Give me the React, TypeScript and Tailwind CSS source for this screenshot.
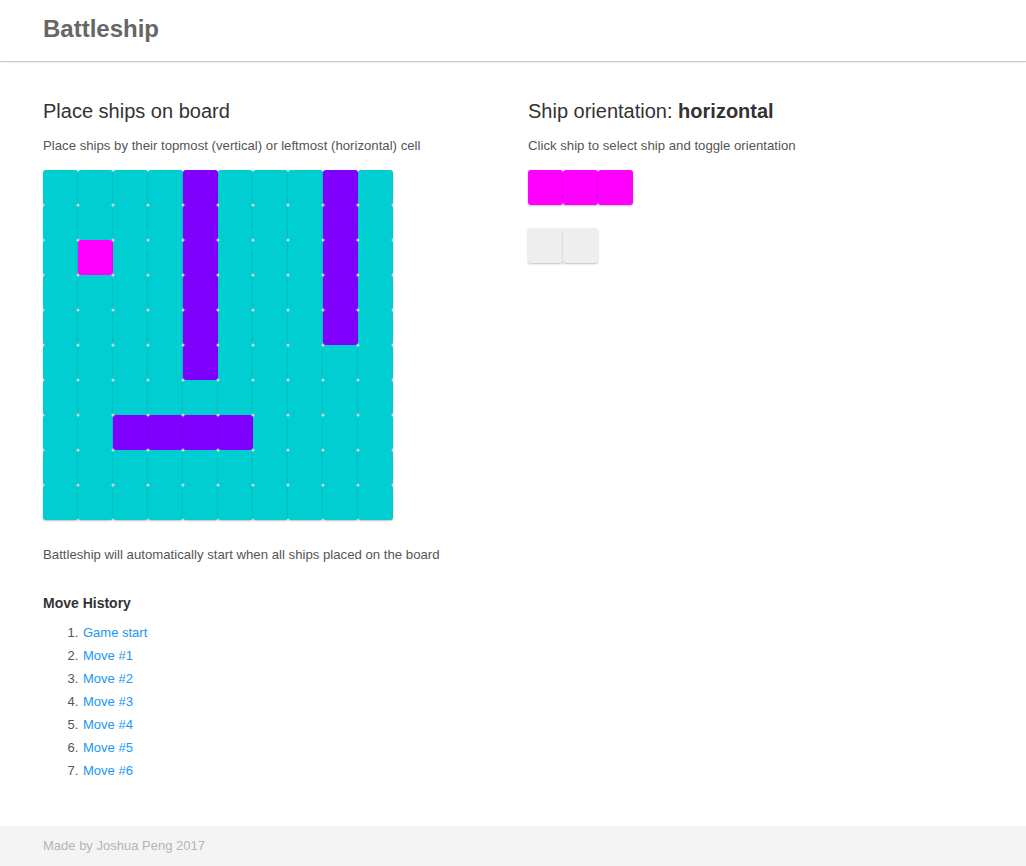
import React from 'react';

type Cell = 'water' | 'ship' | 'hover';

const SHIPS: Array<[number, number, number, boolean]> = [
  // row, col, length, vertical
  [0, 4, 6, true],
  [0, 8, 5, true],
  [7, 2, 4, false],
];

const buildBoard = (): Cell[][] => {
  const board: Cell[][] = Array.from({ length: 10 }, () => Array.from({ length: 10 }, () => 'water' as Cell));
  SHIPS.forEach(([r, c, len, vertical]) => {
    for (let i = 0; i < len; i++) {
      if (vertical) board[r + i][c] = 'ship';
      else board[r][c + i] = 'ship';
    }
  });
  board[2][1] = 'hover';
  return board;
};

const cellColor: Record<Cell, string> = {
  water: 'bg-[#00ced1]',
  ship: 'bg-[#7f00ff]',
  hover: 'bg-[#ff00ff]',
};

const Square: React.FC<{ className: string }> = ({ className }) => (
  <div className={`w-[35px] h-[35px] rounded-[3px] shadow-[0_1px_2px_rgba(0,0,0,0.25)] ${className}`} />
);

const moves = ['Game start', 'Move #1', 'Move #2', 'Move #3', 'Move #4', 'Move #5', 'Move #6'];

const App: React.FC = () => {
  const board = buildBoard();

  return (
    <div className="min-h-screen flex flex-col bg-white text-[#333] font-['Liberation_Sans',Arial,sans-serif]">
      <header className="h-[62px] border-b border-[#c8c8c8] shadow-[0_1px_2px_rgba(0,0,0,0.06)] px-[43px] flex items-center">
        <h1 className="text-[24px] font-bold text-[#666] pb-[4px]">Battleship</h1>
      </header>

      <main className="flex-grow px-[43px] pt-[36px] pb-[40px]">
        <div className="grid grid-cols-[470px_470px] gap-x-[15px]">
          <section>
            <h2 className="text-[20px] leading-[26px] text-[#333]">Place ships on board</h2>
            <p className="text-[13.2px] leading-[18px] text-[#555] mt-[13px]">
              Place ships by their topmost (vertical) or leftmost (horizontal) cell
            </p>
            <div className="mt-[15px] flex flex-col w-[350px]">
              {board.map((row, r) => (
                <div key={r} className="flex">
                  {row.map((cell, c) => (
                    <Square key={c} className={cellColor[cell]} />
                  ))}
                </div>
              ))}
            </div>
            <p className="text-[13.2px] leading-[18px] text-[#555] mt-[26px]">
              Battleship will automatically start when all ships placed on the board
            </p>

            <h3 className="text-[14px] leading-[18px] font-bold text-[#333] mt-[30px]">Move History</h3>
            <ol className="list-decimal pl-[39px] mt-[12px] text-[13px] text-[#555]">
              {moves.map((m) => (
                <li key={m} className="leading-[18px] mb-[5px] pl-[1px]">
                  <a href="#" className="text-[#2196f3]">{m}</a>
                </li>
              ))}
            </ol>
          </section>

          <section>
            <h2 className="text-[20px] leading-[26px] text-[#333]">
              Ship orientation: <span className="font-bold">horizontal</span>
            </h2>
            <p className="text-[13.2px] leading-[18px] text-[#555] mt-[13px]">
              Click ship to select ship and toggle orientation
            </p>
            <div className="mt-[15px] flex">
              {[0, 1, 2].map((i) => (
                <Square key={i} className="bg-[#ff00ff]" />
              ))}
            </div>
            <div className="mt-[23px] flex">
              {[0, 1].map((i) => (
                <Square key={i} className="bg-[#eeeeee]" />
              ))}
            </div>
          </section>
        </div>
      </main>

      <footer className="h-[40px] bg-[#f4f4f4] px-[43px] flex items-center">
        <p className="text-[13px] text-[#b5b5b5]">Made by Joshua Peng 2017</p>
      </footer>
    </div>
  );
};

export default App;
